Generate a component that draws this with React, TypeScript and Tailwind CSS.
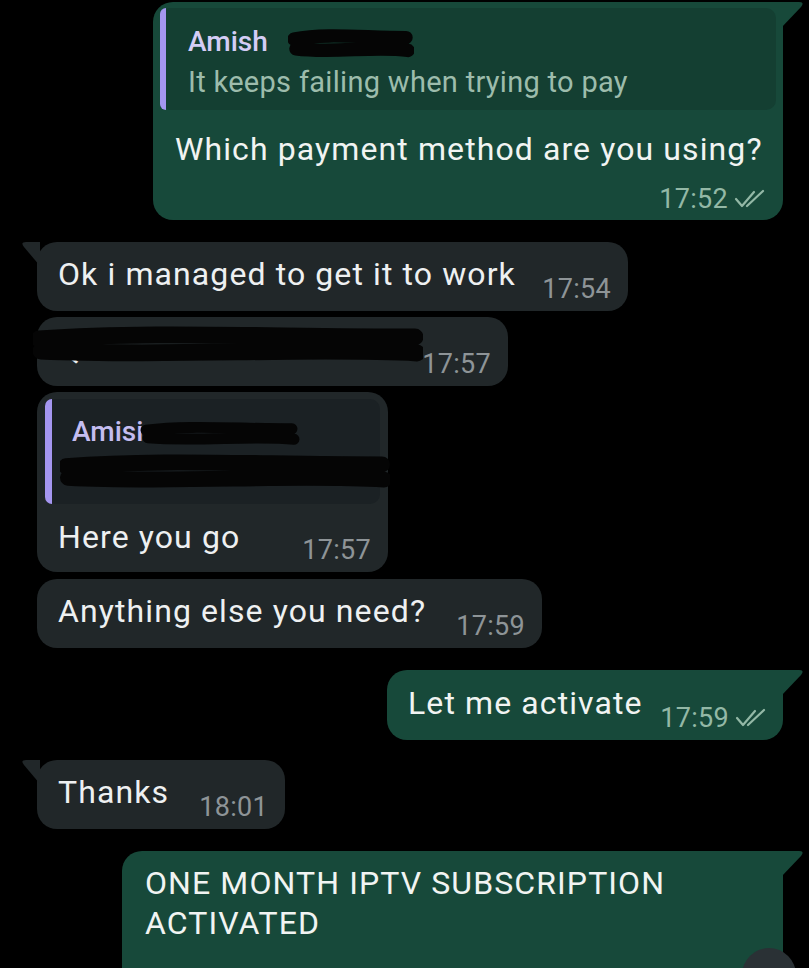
import React from 'react';

const font = "font-['Roboto','Liberation_Sans',sans-serif]";
const body = 'text-[32px] leading-[40px] tracking-[1.1px]';
const stamp = 'text-[27px] leading-[30px] tracking-[0.3px]';

function Ticks() {
  return (
    <svg width="34" height="22" viewBox="0 0 34 22" fill="none" className="ml-[6px]">
      <path d="M2 11 L8 18 L20 4" stroke="#93b8a6" strokeWidth="2.2" strokeLinecap="round" strokeLinejoin="round" />
      <path d="M13 18 L29 3" stroke="#93b8a6" strokeWidth="2.2" strokeLinecap="round" />
    </svg>
  );
}

function OutTail() {
  return (
    <svg width="24" height="26" viewBox="0 0 24 26" className="absolute top-0 -right-[22px]">
      <path d="M0 0 H18 Q24 0 20 5 L0 26 Z" fill="#17493a" />
    </svg>
  );
}

function InTail() {
  return (
    <svg width="18" height="24" viewBox="0 0 18 24" className="absolute top-0 -left-[15px]">
      <path d="M18 0 H4 Q-2 0 2 5 L18 24 Z" fill="#212729" />
    </svg>
  );
}

function Scribble({ className, w, h }: { className: string; w: number; h: number }) {
  return (
    <svg width={w} height={h} viewBox={`0 0 ${w} ${h}`} className={`absolute ${className}`}>
      <path
        d={`M6 ${h * 0.35} C ${w * 0.3} ${h * 0.15}, ${w * 0.6} ${h * 0.3}, ${w - 8} ${h * 0.3} M8 ${h * 0.65} C ${w * 0.35} ${h * 0.8}, ${w * 0.7} ${h * 0.55}, ${w - 6} ${h * 0.7}`}
        stroke="#050505"
        strokeWidth={h * 0.42}
        strokeLinecap="round"
        fill="none"
      />
    </svg>
  );
}

function Incoming({ text, time, width, tail }: { text: string; time: string; width: string; tail?: boolean }) {
  return (
    <div className={`relative ml-[37px] ${width} h-[69px] rounded-[20px] bg-[#212729] pl-[21px] pr-[17px] pt-[12px] pb-[7px] flex items-end justify-between`}>
      {tail && <InTail />}
      <span className={`${body} text-[#eef0f1] mb-[10px] whitespace-nowrap`}>{text}</span>
      <span className={`${stamp} text-[#8e9497]`}>{time}</span>
    </div>
  );
}

export default function App() {
  return (
    <div className={`w-[809px] h-[968px] bg-black overflow-hidden relative ${font}`}>
      {/* outgoing with quote */}
      <div className="relative ml-[153px] w-[630px] mt-[2px] h-[218px] rounded-[20px] rounded-tr-none bg-[#17493a] px-[7px] pt-[6px]">
        <OutTail />
        <div className="relative flex h-[102px] rounded-[10px] bg-[#143f32]">
          <div className="w-[6px] rounded-l-[10px] bg-[#a596f0]" />
          <div className="pl-[22px] pt-[17px] flex flex-col">
            <span className="text-[28px] leading-[34px] font-medium text-[#d4cdf6]">Amish</span>
            <span className="text-[29px] leading-[34px] tracking-[0.3px] mt-[6px] text-[#9dbcac]">It keeps failing when trying to pay</span>
          </div>
          <Scribble className="left-[128px] top-[20px]" w={126} h={32} />
        </div>
        <div className={`pl-[15px] mt-[19px] ${body} text-[#f1f4f2]`}>Which payment method are you using?</div>
        <div className="flex items-center justify-end pr-[8px] mt-[15px]">
          <span className={`${stamp} text-[#93b8a6]`}>17:52</span>
          <Ticks />
        </div>
      </div>

      <div className="mt-[22px]">
        <Incoming text="Ok i managed to get it to work" time="17:54" width="w-[591px]" tail />
      </div>

      <div className="mt-[6px] relative">
        <Incoming text="Q" time="17:57" width="w-[471px]" />
        <Scribble className="left-[33px] top-[8px]" w={390} h={40} />
      </div>

      {/* incoming with quote */}
      <div className="mt-[6px] relative ml-[37px] w-[351px] h-[180px] rounded-[20px] bg-[#212729] px-[8px] pt-[7px]">
        <div className="relative flex h-[105px] rounded-[10px] bg-[#1b2124]">
          <div className="w-[7px] rounded-l-[10px] bg-[#a596f0]" />
          <div className="pl-[20px] pt-[16px] flex flex-col">
            <span className="text-[28px] leading-[34px] font-medium text-[#c4bdf0]">Amisi</span>
          </div>
          <Scribble className="left-[95px] top-[22px]" w={160} h={26} />
          <Scribble className="left-[15px] top-[54px]" w={330} h={38} />
        </div>
        <div className="flex items-end justify-between pl-[13px] pr-[9px] mt-[13px]">
          <span className={`${body} text-[#eef0f1] mb-[8px]`}>Here you go</span>
          <span className={`${stamp} text-[#8e9497]`}>17:57</span>
        </div>
      </div>

      <div className="mt-[7px]">
        <Incoming text="Anything else you need?" time="17:59" width="w-[505px]" />
      </div>

      {/* outgoing */}
      <div className="mt-[22px] relative ml-[387px] w-[396px] h-[70px] rounded-[20px] rounded-tr-none bg-[#17493a] pl-[21px] pr-[14px] pt-[13px] pb-[7px] flex items-end justify-between">
        <OutTail />
        <span className={`${body} text-[#f1f4f2] mb-[10px]`}>Let me activate</span>
        <div className="flex items-center">
          <span className={`${stamp} text-[#93b8a6]`}>17:59</span>
          <Ticks />
        </div>
      </div>

      <div className="mt-[20px]">
        <Incoming text="Thanks" time="18:01" width="w-[248px]" tail />
      </div>

      <div className="mt-[22px] relative ml-[122px] w-[661px] h-[140px] rounded-[20px] rounded-tr-none bg-[#17493a] pl-[23px] pt-[12px]">
        <OutTail />
        <div className={`${body} text-[#f1f4f2]`}>
          ONE MONTH IPTV SUBSCRIPTION
          <br />
          ACTIVATED
        </div>
        <div className="absolute left-[620px] top-[97px] w-[54px] h-[54px] rounded-full bg-[#2a3135]" />
      </div>
    </div>
  );
}
